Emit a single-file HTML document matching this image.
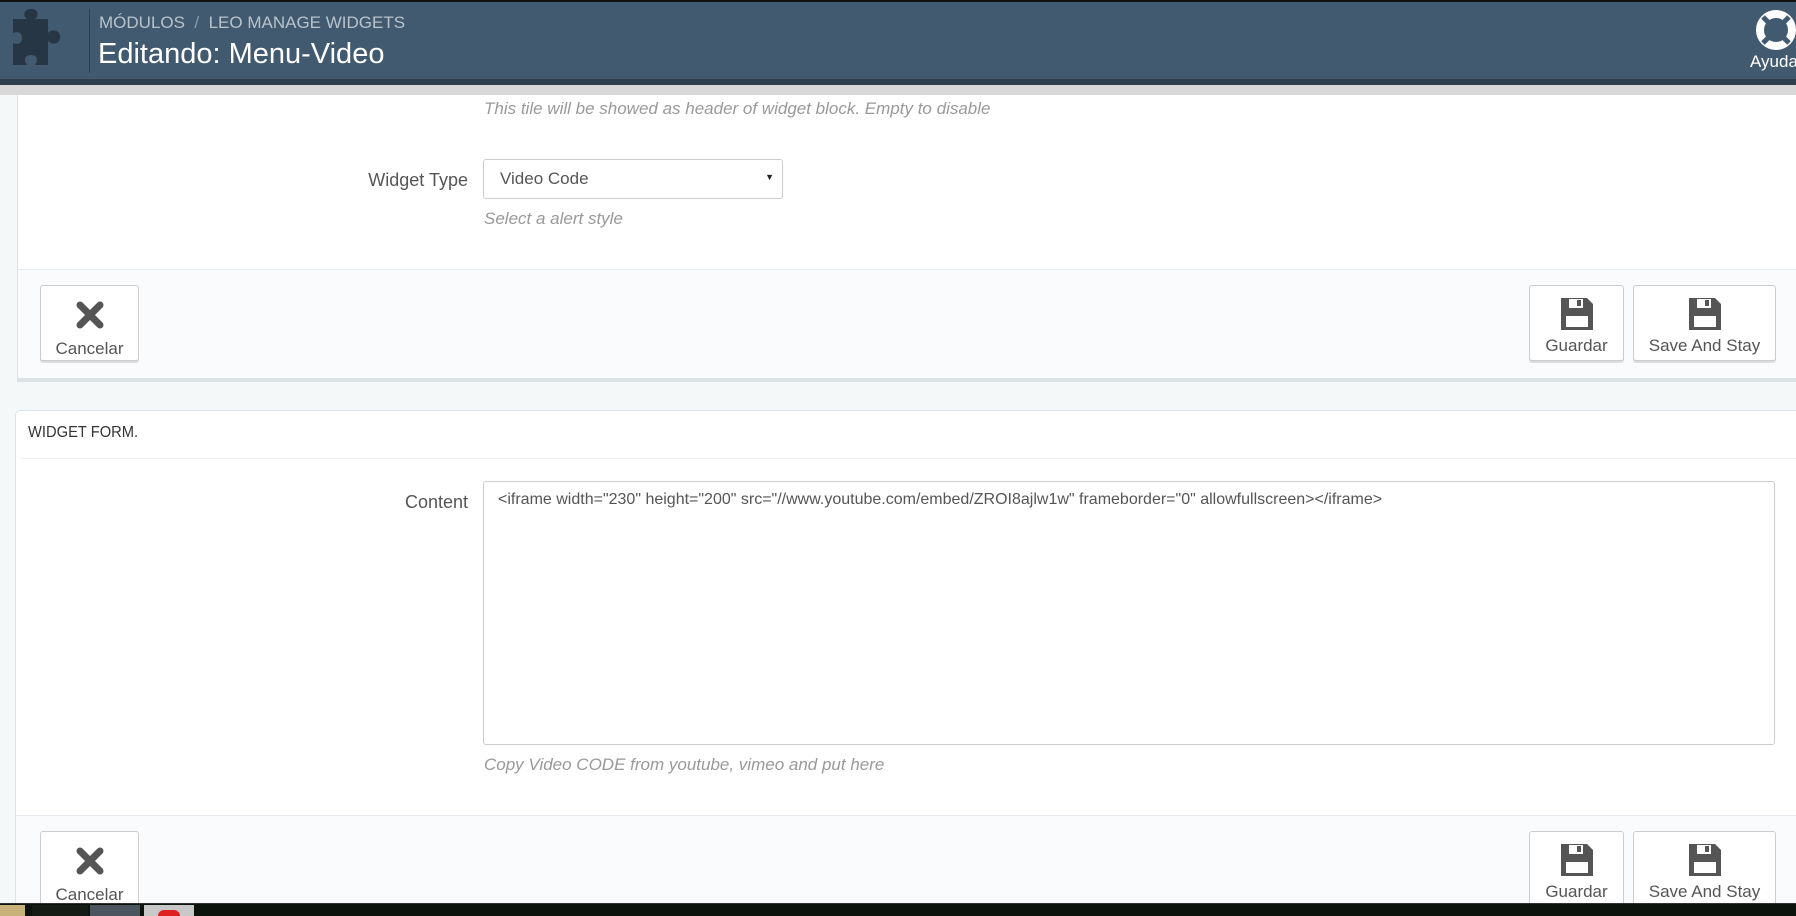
<!DOCTYPE html>
<html><head><meta charset="utf-8"><style>
*{box-sizing:border-box;margin:0;padding:0}
body{width:1796px;height:916px;overflow:hidden;background:#f5f8f9;font-family:"Liberation Sans",sans-serif;color:#555;position:relative}
.abs{position:absolute}
#hdr{left:0;top:0;width:1796px;height:85px;background:#415a70;border-top:2px solid #111;border-bottom:6px solid #2e3f4e}
#grey{left:0;top:85px;width:1796px;height:10px;background:#d8d8d8}
.panel{background:#fff;border-left:1px solid #dbe6e9;border-top:1px solid #dbe6e9}
.foot{background:#fafbfc;border-top:1px solid #e6ecef}
.btn{position:absolute;background:#fff;border:1px solid #ccc;border-radius:3px;box-shadow:0 2px 0 #ddd;text-align:center;font-size:17px;color:#555}
.btn svg{display:block;margin:10px auto 4px}
.btn svg.x{margin:14px auto 9px}
.lbl{font-size:18px;color:#555;text-align:right}
.help{font-size:17px;color:#999;font-style:italic}
</style></head><body>
<div id="hdr" class="abs"></div>
<svg class="abs" style="left:13px;top:9px" width="53" height="56" viewBox="0 0 53 56"><path fill="#263645" d="M0 10h14c-4-3-4-10 4-10s8 7 4 10h13v14c3-4 12-4 12 4s-9 8-12 4v24H22c3-4 3-10-4-10s-7 6-4 10H0V34c4 2 9 1 9-5s-5-7-9-5z"/></svg>
<div class="abs" style="left:89px;top:9px;width:1px;height:64px;background:#2e3f4e"></div>
<div class="abs" style="left:99px;top:13px;font-size:17px;color:#b7c3cd">MÓDULOS &nbsp;<span style="color:#8a9bab">/</span>&nbsp; LEO MANAGE WIDGETS</div>
<div class="abs" style="left:98px;top:38px;font-size:29px;color:#fff">Editando: Menu-Video</div>
<svg class="abs" style="left:1755px;top:9px" width="42" height="42" viewBox="0 0 42 42"><circle cx="21" cy="21" r="16" fill="none" stroke="#fff" stroke-width="8"/><g stroke="#415a70" stroke-width="5"><path d="M8 8l8 8M34 8l-8 8M8 34l8-8M34 34l-8-8"/></g></svg>
<div class="abs" style="left:1750px;top:52px;font-size:17px;color:#fff">Ayuda</div>
<div id="grey" class="abs"></div>

<div class="abs panel" style="left:17px;top:95px;width:1779px;height:285px;border-top:none"></div>
<div class="abs help" style="left:484px;top:99px">This tile will be showed as header of widget block. Empty to disable</div>
<div class="abs lbl" style="left:200px;top:170px;width:268px">Widget Type</div>
<div class="abs" style="left:483px;top:159px;width:300px;height:40px;border:1px solid #ccc;border-radius:3px;font-size:17px;color:#555;padding:9px 16px">Video Code<span style="position:absolute;right:8px;top:12px;font-size:9px;color:#222">▼</span></div>
<div class="abs help" style="left:484px;top:209px">Select a alert style</div>
<div class="abs foot" style="left:18px;top:269px;width:1778px;height:109px"></div>
<div class="abs" style="left:17px;top:378px;width:1779px;height:4px;background:#dde2e5"></div>
<div class="btn" style="left:40px;top:285px;width:99px;height:76px"><svg class="x" width="30" height="30" viewBox="0 0 30 30"><path d="M5 5L25 25M25 5L5 25" stroke="#555" stroke-width="7" stroke-linecap="round"/></svg>Cancelar</div>
<div class="btn" style="left:1529px;top:285px;width:95px;height:76px"><svg width="36" height="36" viewBox="0 0 36 36"><path d="M2 2h26l6 6v26H2z" fill="#555"/><rect x="7" y="20" width="22" height="11" fill="#fff"/><rect x="10" y="3" width="14" height="9" fill="#fff"/><rect x="18" y="4" width="4" height="6" fill="#555"/></svg>Guardar</div>
<div class="btn" style="left:1633px;top:285px;width:143px;height:76px"><svg width="36" height="36" viewBox="0 0 36 36"><path d="M2 2h26l6 6v26H2z" fill="#555"/><rect x="7" y="20" width="22" height="11" fill="#fff"/><rect x="10" y="3" width="14" height="9" fill="#fff"/><rect x="18" y="4" width="4" height="6" fill="#555"/></svg>Save And Stay</div>

<div class="abs panel" style="left:15px;top:410px;width:1781px;height:495px;border-radius:5px 0 0 0"></div>
<div class="abs" style="left:28px;top:424px;font-size:16px;color:#333;transform:scaleX(0.92);transform-origin:left">WIDGET FORM.</div>
<div class="abs" style="left:21px;top:458px;width:1775px;height:1px;background:#eee"></div>
<div class="abs lbl" style="left:200px;top:492px;width:268px">Content</div>
<div class="abs" style="left:483px;top:481px;width:1292px;height:264px;border:1px solid #ccc;border-radius:3px;font-size:16px;color:#555;padding:9px 14px">&lt;iframe width="230" height="200" src="//www.youtube.com/embed/ZROI8ajlw1w" frameborder="0" allowfullscreen&gt;&lt;/iframe&gt;</div>
<div class="abs help" style="left:484px;top:755px">Copy Video CODE from youtube, vimeo and put here</div>
<div class="abs foot" style="left:16px;top:815px;width:1780px;height:90px"></div>
<div class="btn" style="left:40px;top:831px;width:99px;height:76px"><svg class="x" width="30" height="30" viewBox="0 0 30 30"><path d="M5 5L25 25M25 5L5 25" stroke="#555" stroke-width="7" stroke-linecap="round"/></svg>Cancelar</div>
<div class="btn" style="left:1529px;top:831px;width:95px;height:76px"><svg width="36" height="36" viewBox="0 0 36 36"><path d="M2 2h26l6 6v26H2z" fill="#555"/><rect x="7" y="20" width="22" height="11" fill="#fff"/><rect x="10" y="3" width="14" height="9" fill="#fff"/><rect x="18" y="4" width="4" height="6" fill="#555"/></svg>Guardar</div>
<div class="btn" style="left:1633px;top:831px;width:143px;height:76px"><svg width="36" height="36" viewBox="0 0 36 36"><path d="M2 2h26l6 6v26H2z" fill="#555"/><rect x="7" y="20" width="22" height="11" fill="#fff"/><rect x="10" y="3" width="14" height="9" fill="#fff"/><rect x="18" y="4" width="4" height="6" fill="#555"/></svg>Save And Stay</div>

<div class="abs" style="left:0;top:903px;width:1796px;height:13px;background:#0c120c;border-top:1px solid #333"></div>
<div class="abs" style="left:0;top:905px;width:25px;height:11px;background:#c9b27a"></div>
<div class="abs" style="left:32px;top:905px;width:56px;height:11px;background:#141a14"></div>
<div class="abs" style="left:90px;top:905px;width:50px;height:11px;background:#4a5560"></div>
<div class="abs" style="left:144px;top:905px;width:50px;height:11px;background:#c8c8c8"></div>
<div class="abs" style="left:158px;top:910px;width:22px;height:6px;background:#e02020;border-radius:11px 11px 0 0"></div>
</body></html>
